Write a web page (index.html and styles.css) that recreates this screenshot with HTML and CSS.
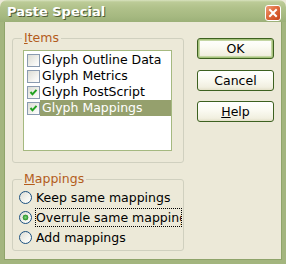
FILE: index.html
```html
<!DOCTYPE html>
<html lang="en">

<head>
  <meta charset="UTF-8" />
  <title>Paste Special</title>
  <link rel="stylesheet" href="styles.css">
</head>

<body>
  <div class="window">
    <div class="titlebar">
      <span class="title">Paste Special</span>
      <span class="close">
        <svg width="14" height="14" viewBox="0 0 14 14">
          <path d="M4 4 L10 10 M10 4 L4 10" stroke="#fff" stroke-width="2" stroke-linecap="square" />
        </svg>
      </span>
    </div>

    <div class="client">
      <div class="groups">
        <fieldset class="group items">
          <legend><u>I</u>tems</legend>
          <ul class="listbox">
            <li><span class="check"></span><span class="label">Glyph Outline Data</span></li>
            <li><span class="check"></span><span class="label">Glyph Metrics</span></li>
            <li>
              <span class="check">
                <svg width="11" height="11" viewBox="0 0 11 11"><path d="M2.5 5 L4.5 7.3 L8.5 2.8" fill="none" stroke="#21a121" stroke-width="2" /></svg>
              </span>
              <span class="label">Glyph PostScript</span>
            </li>
            <li class="selected">
              <span class="check">
                <svg width="11" height="11" viewBox="0 0 11 11"><path d="M2.5 5 L4.5 7.3 L8.5 2.8" fill="none" stroke="#21a121" stroke-width="2" /></svg>
              </span>
              <span class="label">Glyph Mappings</span>
            </li>
          </ul>
        </fieldset>

        <fieldset class="group mappings">
          <legend><u>M</u>appings</legend>
          <div class="radio"><span class="dot"></span><span class="label">Keep same mappings</span></div>
          <div class="radio focused"><span class="dot on"></span><span class="label">Overrule same mappings</span></div>
          <div class="radio"><span class="dot"></span><span class="label">Add mappings</span></div>
        </fieldset>
      </div>

      <div class="buttons">
        <button class="default">OK</button>
        <button>Cancel</button>
        <button><u>H</u>elp</button>
      </div>
    </div>
  </div>
</body>

</html>
```

FILE: styles.css
```css
body {
  margin: 0;
  background-color: #ece9d8;
  font-family: "DejaVu Sans", Verdana, sans-serif;
  font-size: 12.5px;
  color: #000;
}

.window {
  width: 286px;
  height: 264px;
  display: flex;
  flex-direction: column;
}

.titlebar {
  height: 22px;
  flex: none;
  display: flex;
  justify-content: space-between;
  align-items: flex-start;
  padding: 0 5px 0 7px;
  border-radius: 7px 7px 0 0;
  background: linear-gradient(#d9e2c0 0, #bccb97 2px, #b0c18a 8px, #a6b981 16px, #9cb078 22px);
}

.title {
  margin-top: 4px;
  font-weight: bold;
  font-size: 13px;
  line-height: 15px;
  color: #fff;
  text-shadow: 1px 1px 0 #4f5d35;
}

.close {
  margin-top: 5px;
  width: 14px;
  height: 14px;
  border: 1px solid #fff;
  border-radius: 3px;
  background: linear-gradient(135deg, #f0a07a, #df6a3c 45%, #c8431a);
  display: flex;
}

.client {
  flex: 1;
  display: flex;
  align-items: flex-start;
  padding: 9px 0 0 8px;
  border: 4px solid #a3b57e;
  border-top: none;
  box-shadow: inset 1px 0 0 #8fa46a, inset -1px 0 0 #8fa46a, inset 0 -1px 0 #8fa46a;
  background-color: #ece9d8;
}

.groups {
  width: 172px;
  flex: none;
}

.group {
  margin: 0;
  padding: 0;
  border: 1px solid #d0d0bf;
  border-radius: 3px;
  min-width: 0;
}

.group legend {
  margin-left: 9px;
  padding: 0 2px;
  line-height: 14px;
  color: #b35c1c;
}

.group u {
  text-decoration-thickness: 1px;
}

.items {
  padding-bottom: 11px;
}

.listbox {
  list-style: none;
  margin: 5px 0 0 10px;
  padding: 1px 0 0;
  width: 149px;
  height: 101px;
  box-sizing: border-box;
  border: 1px solid #a5b980;
  background-color: #fff;
}

.listbox li {
  display: flex;
  align-items: center;
  height: 16px;
}

.check {
  width: 13px;
  height: 13px;
  box-sizing: border-box;
  margin-left: 3px;
  flex: none;
  display: flex;
  border: 1px solid #8a9bb0;
  background: linear-gradient(135deg, #dcdcd4, #f6f6f3 70%, #fff);
}

.listbox .label {
  flex: 1;
  height: 16px;
  line-height: 16px;
  padding-left: 2px;
  white-space: nowrap;
}

.listbox .selected .label {
  background-color: #95a06d;
  color: #fff;
}

.mappings {
  margin-top: 9px;
  padding: 1px 0 3px;
}

.radio {
  display: flex;
  align-items: center;
  height: 20px;
  padding-left: 6px;
}

.dot {
  width: 13px;
  height: 13px;
  box-sizing: border-box;
  flex: none;
  margin-right: 3px;
  border: 1px solid #1c5180;
  border-radius: 50%;
  background: linear-gradient(135deg, #dcdcd4, #f5f5f0 60%, #fff);
}

.dot.on {
  background: radial-gradient(circle, #7fd37f 0, #3ea53e 2px, #2f922f 2.6px, transparent 3.2px),
    linear-gradient(135deg, #dcdcd4, #f5f5f0 60%, #fff);
}

.radio .label {
  flex: 1;
  min-width: 0;
  margin-right: 1px;
  height: 19px;
  line-height: 17px;
  box-sizing: border-box;
  border: 1px dotted transparent;
  white-space: nowrap;
  overflow: hidden;
}

.radio.focused .label {
  border-color: #000;
}

.buttons {
  display: flex;
  flex-direction: column;
  gap: 10.5px;
  margin: 7px 0 0 13px;
}

button {
  width: 77px;
  height: 21px;
  padding: 0;
  font-family: inherit;
  font-size: 12.5px;
  color: #000;
  border: 1px solid #3d6120;
  border-radius: 3px;
  background: linear-gradient(#ffffff, #fbfbf3 40%, #f1efe0 85%, #e3e0c9);
}

button.default {
  box-shadow: inset 0 0 0 1px #a5c27b, inset 0 0 0 2px #c4d6a4;
}
```
